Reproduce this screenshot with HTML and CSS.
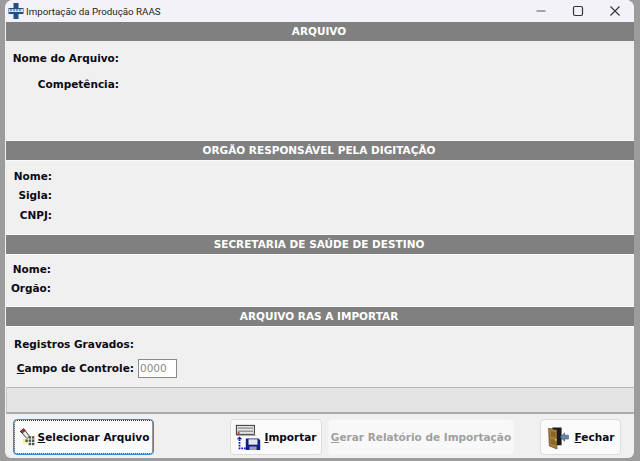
FILE: index.html
```html
<!DOCTYPE html>
<html lang="pt">
<head>
<meta charset="utf-8">
<title>Importação da Produção RAAS</title>
<link rel="stylesheet" href="styles.css">
</head>
<body>
<div class="window">
  <header class="titlebar">
    <svg class="app-icon" width="16" height="16" viewBox="0 0 16 16"><path d="M5.500 0h5v5h5v6h-5v5h-5v-5h-5v-6h5z" fill="#1f4f86"/><rect x="1" y="6" width="14" height="3" fill="#cfe0ef"/><path d="M2 7h12" stroke="#1f4f86" stroke-dasharray="2 1"/></svg>
    <span class="title">Importação da Produção RAAS</span>
    <div class="controls">
      <svg width="12" height="12" viewBox="0 0 12 12"><path d="M1.500 6h9" stroke="#555" stroke-width="1.200"/></svg>
      <svg width="12" height="12" viewBox="0 0 12 12"><rect x="1.500" y="1.500" width="9" height="9" rx="1.500" fill="none" stroke="#333" stroke-width="1.200"/></svg>
      <svg width="12" height="12" viewBox="0 0 12 12"><path d="M1.500 1.500l9 9M10.500 1.500l-9 9" stroke="#333" stroke-width="1.100"/></svg>
    </div>
  </header>

  <section class="sec sec-arquivo">
    <h2 class="bar">ARQUIVO</h2>
    <div class="body">
      <div class="row row-a"><span class="lbl w-a">Nome do Arquivo:</span></div>
      <div class="row row-a"><span class="lbl w-a">Competência:</span></div>
    </div>
  </section>

  <section class="sec sec-orgao">
    <h2 class="bar">ORGÃO RESPONSÁVEL PELA DIGITAÇÃO</h2>
    <div class="body">
      <div class="row row-b"><span class="lbl w-b">Nome:</span></div>
      <div class="row row-b"><span class="lbl w-b">Sigla:</span></div>
      <div class="row row-b"><span class="lbl w-b">CNPJ:</span></div>
    </div>
  </section>

  <section class="sec sec-secretaria">
    <h2 class="bar">SECRETARIA DE SAÚDE DE DESTINO</h2>
    <div class="body">
      <div class="row row-c"><span class="lbl w-c">Nome:</span></div>
      <div class="row row-c"><span class="lbl w-c">Orgão:</span></div>
    </div>
  </section>

  <section class="sec sec-ras">
    <h2 class="bar">ARQUIVO RAS A IMPORTAR</h2>
    <div class="body">
      <div class="row row-d"><span class="lbl w-d">Registros Gravados:</span></div>
      <div class="row row-e"><span class="lbl w-d"><u>C</u>ampo de Controle:</span><span class="field">0000</span></div>
    </div>
  </section>

  <div class="status"></div>

  <footer class="actions">
    <button class="btn btn-sel">
      <svg width="18" height="18" viewBox="0 0 22 22">
        <path d="M3 4l4-3 7 9-3 3z" fill="#e8e8e8" stroke="#222"/>
        <path d="M3 4l4-3 2 2.500-4 3z" fill="#c8202a" stroke="#222" stroke-width=".6"/>
        <rect x="6" y="13" width="6" height="6" fill="#f2ee9a"/>
        <g fill="#4a5a4a"><rect x="13" y="10" width="3" height="3"/><rect x="17" y="10" width="3" height="3"/><rect x="9" y="14" width="3" height="3"/><rect x="13" y="14" width="3" height="3"/><rect x="17" y="14" width="3" height="3"/><rect x="13" y="18" width="3" height="3"/><rect x="17" y="18" width="3" height="3"/></g>
      </svg>
      <span><u>S</u>elecionar Arquivo</span>
    </button>
    <button class="btn btn-imp">
      <svg width="27" height="27" viewBox="0 0 30 30">
        <rect x="1.500" y="1.500" width="20" height="10" fill="#e4e4e4" stroke="#222"/>
        <path d="M3 4.500h17M3 8h17" stroke="#666"/>
        <rect x="3" y="9" width="2" height="2" fill="#d22"/>
        <path d="M1 12.500h22" stroke="#888"/>
        <path d="M5 17v10h7" fill="none" stroke="#1414d0" stroke-width="2" stroke-dasharray="2 1"/>
        <path d="M2 17l3-3 3 3z" fill="#1414d0"/>
        <path d="M12 16h14l2 2v11h-16z" fill="#0f1f80"/>
        <rect x="15" y="17" width="10" height="6" fill="#e6e6ee"/>
        <rect x="16" y="25" width="8" height="4" fill="#9a9ab0"/>
      </svg>
      <span><u>I</u>mportar</span>
    </button>
    <button class="btn btn-rel" disabled><span><u>G</u>erar Relatório de Importação</span></button>
    <button class="btn btn-fec">
      <svg width="23" height="25" viewBox="0 0 30 30">
        <path d="M7 2h12v23H7z" fill="#1a1a1a"/>
        <path d="M2 3l11 2v25L3 26z" fill="#a97f3f" stroke="#3a2a10" stroke-width=".7"/>
        <path d="M5 7l6 1v7l-6-1zM5 17l6 1v7l-6-2z" fill="#8a6428"/>
        <circle cx="11.500" cy="18" r="1.200" fill="#e8d820"/>
        <path d="M28 12v5h-5v3l-6-5.500 6-5.500v3z" fill="#5a8aa8" stroke="#24384a" stroke-width=".6"/>
      </svg>
      <span><u>F</u>echar</span>
    </button>
  </footer>
</div>
</body>
</html>
```
FILE: styles.css
```css
* { box-sizing: border-box; }
html, body { margin: 0; padding: 0; }
body {
  width: 640px;
  height: 461px;
  overflow: hidden;
  background: #9c9c9c;
  font-family: "DejaVu Sans", Verdana, sans-serif;
  font-size: 10.500px;
  font-weight: 700;
  color: #0a0a14;
}
.window {
  width: 629px;
  height: 458px;
  margin-left: 5px;
  background: #f0f0f0;
  border-radius: 8px 8px 6px 6px;
  overflow: hidden;
  display: flex;
  flex-direction: column;
}
.titlebar {
  height: 22px;
  flex: none;
  background: #f3f2f9;
  display: flex;
  align-items: center;
  padding-left: 3px;
  font-family: Roboto, "Open Sans", sans-serif;
  font-weight: 400;
  font-size: 9.750px;
  color: #222;
}
.app-icon { margin-right: 2px; }
.title { flex: 1; }
.controls {
  display: flex;
  gap: 25px;
  margin-right: 13px;
}
.controls svg { display: block; }
.sec { flex: none; }
.bar {
  margin: 0 0 0 1px;
  padding-right: 2px;
  height: 19px;
  background: #808080;
  color: #fff;
  font-size: 10.500px;
  font-weight: 700;
  line-height: 19px;
  text-align: center;
}
.sec-arquivo { height: 119px; }
.sec-orgao { height: 94px; }
.sec-secretaria { height: 72px; }
.sec-ras { height: 80px; }
.sec-orgao .bar,
.sec-secretaria .bar,
.sec-ras .bar { box-shadow: 0 -1px #fafafa, 0 1px #fafafa; }
.sec-arquivo .body { padding-top: 4px; }
.sec-orgao .body { padding-top: 6px; }
.sec-secretaria .body { padding-top: 5px; }
.sec-ras .body { padding-top: 8px; }
.row { display: flex; align-items: center; }
.row-a { height: 26px; }
.row-b { height: 19.500px; }
.row-c { height: 19px; }
.row-d { height: 20px; }
.row-e { height: 24px; margin-top: 2px; }
.lbl { text-align: right; white-space: nowrap; }
.w-a { width: 114px; }
.w-b { width: 47px; }
.w-c { width: 46px; }
.w-d { width: 129px; }
.field {
  margin-left: 4px;
  width: 39px;
  height: 19px;
  border: 1px solid #8a8a8a;
  background: #fff;
  color: #8a8a8a;
  font-weight: 400;
  line-height: 17px;
  padding-left: 1px;
}
.status {
  flex: none;
  height: 27px;
  margin-left: 1px;
  background: #e4e4e4;
  border: 1px solid #b8b8b8;
  border-left-color: #c8c8c8;
  border-right: 0;
  border-bottom: 2px solid #ababab;
}
.actions {
  flex: 1;
  display: flex;
  padding: 5px 0 0 8px;
  align-items: flex-start;
}
.btn {
  height: 36px;
  font: inherit;
  color: inherit;
  background: #fbfbfb;
  border: 1px solid #dcdcdc;
  border-radius: 4px;
  padding: 0;
  display: flex;
  align-items: center;
  justify-content: center;
  white-space: nowrap;
}
.btn svg { flex: none; }
.btn-sel {
  width: 141px;
  border: 1px solid #3a8ad0;
  outline: 1px dotted #333;
  outline-offset: -2px;
  gap: 2px;
}
.btn-imp { width: 92px; margin-left: 76px; gap: 2px; }
.btn-rel {
  width: 186px;
  margin-left: 6px;
  background: #f8f8f8;
  border-color: #f4f4f4;
  color: #a0a0a0;
}
.btn-fec { width: 81px; margin-left: 26px; gap: 5px; }
```
